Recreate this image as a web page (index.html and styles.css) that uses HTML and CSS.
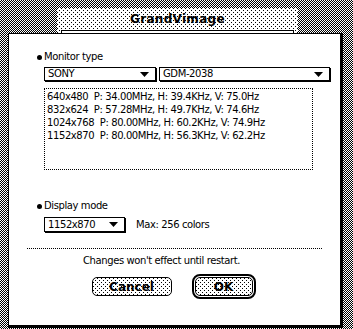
FILE: index.html
```html
<!DOCTYPE html>
<html lang="en">
<head>
    <meta charset="UTF-8">
    <title>GrandVimage</title>
    <link rel="stylesheet" href="styles.css">
</head>
<body>
    <div class="back-window">
        <div class="back-title"><span>GrandVimage</span></div>
        <div class="back-body">
            <div class="back-dash"></div>
        </div>
    </div>

    <div class="dialog">
        <div class="label"><span class="bullet"></span>Monitor type</div>
        <div class="popup-row">
            <div class="popup popup-maker">
                <span>SONY</span>
                <svg class="arrow" width="9" height="5" viewBox="0 0 9 5"><polygon points="0,0 9,0 4.5,5" fill="#000"/></svg>
            </div>
            <div class="popup popup-model">
                <span>GDM-2038</span>
                <svg class="arrow" width="9" height="5" viewBox="0 0 9 5"><polygon points="0,0 9,0 4.5,5" fill="#000"/></svg>
            </div>
        </div>
        <div class="mode-list">
            <div class="mode">640x480&nbsp;&nbsp;P: 34.00MHz, H: 39.4KHz, V: 75.0Hz</div>
            <div class="mode">832x624&nbsp;&nbsp;P: 57.28MHz, H: 49.7KHz, V: 74.6Hz</div>
            <div class="mode">1024x768&nbsp;&nbsp;P: 80.00MHz, H: 60.2KHz, V: 74.9Hz</div>
            <div class="mode">1152x870&nbsp;&nbsp;P: 80.00MHz, H: 56.3KHz, V: 62.2Hz</div>
        </div>

        <div class="label label-display"><span class="bullet"></span>Display mode</div>
        <div class="popup-row">
            <div class="popup popup-res">
                <span>1152x870</span>
                <svg class="arrow" width="9" height="5" viewBox="0 0 9 5"><polygon points="0,0 9,0 4.5,5" fill="#000"/></svg>
            </div>
            <span class="max">Max: 256 colors</span>
        </div>

        <div class="separator"></div>
        <div class="notice">Changes won't effect until restart.</div>

        <div class="buttons">
            <button class="btn btn-cancel">Cancel</button>
            <div class="default-ring">
                <button class="btn btn-ok">OK</button>
            </div>
        </div>
    </div>
</body>
</html>
```

FILE: styles.css
```css
body {
    margin: 0;
    width: 353px;
    height: 329px;
    overflow: hidden;
    position: relative;
    font-family: "DejaVu Sans", Verdana, sans-serif;
    font-size: 10px;
    letter-spacing: -0.4px;
    color: #000;
    background: repeating-conic-gradient(#000 0 25%, #fff 0 50%) 0 0 / 2px 2px;
}

/* sparse dot pattern used for title bar and buttons */
.back-window,
.btn {
    background-color: #fff;
    background-image:
        conic-gradient(from 0deg at 1px 1px, transparent 75%, #000 0),
        conic-gradient(from 0deg at 1px 1px, transparent 75%, #000 0);
    background-size: 4px 4px, 4px 4px;
    background-position: 0 0, 2px 2px;
}

.back-window {
    position: absolute;
    left: 57px;
    top: 8px;
    width: 241px;
    height: 317px;
    display: flex;
    flex-direction: column;
}
.back-title {
    height: 22px;
    display: flex;
    align-items: center;
    justify-content: center;
    font-family: "DejaVu Sans", sans-serif;
    font-weight: bold;
    font-size: 12px;
    letter-spacing: 0.3px;
}
.back-body {
    flex: 1;
    margin: 0 4px 4px;
    border: 1px solid #000;
    background: #fff;
    display: flex;
    flex-direction: column;
    justify-content: flex-end;
}
.back-dash {
    height: 3px;
    margin: 0 2px 2px;
    border-top: 1px dashed #000;
    border-bottom: 1px dotted #000;
}

.dialog {
    position: absolute;
    left: 8px;
    top: 33px;
    width: 331px;
    height: 274px;
    background: #fff;
    border-left: 1px solid #000;
    border-top: 1px solid #000;
    border-right: 3px solid #000;
    border-bottom: 3px solid #000;
    padding: 17px 0 0;
    box-sizing: content-box;
    display: flex;
    flex-direction: column;
}

.label {
    height: 12px;
    line-height: 12px;
    display: flex;
    align-items: center;
    padding-left: 28px;
}
.bullet {
    width: 5px;
    height: 5px;
    border-radius: 50%;
    background: #000;
    margin-right: 2px;
}
.label-display {
    margin-top: 30px;
}

.popup-row {
    display: flex;
    align-items: center;
    gap: 3px;
    padding-left: 35px;
    margin-top: 4px;
}
.popup {
    height: 12px;
    border: 1px solid #000;
    box-shadow: 1px 1px 0 #000;
    display: flex;
    align-items: center;
    justify-content: space-between;
    padding: 0 6px 0 3px;
    line-height: 12px;
}
.popup-maker {
    width: 101px;
}
.popup-model {
    width: 160px;
}
.popup-res {
    width: 70px;
    height: 13px;
}
.label-display + .popup-row {
    margin-top: 5px;
}
.max {
    margin-left: 8px;
}

.mode-list {
    margin: 7px 0 0 35px;
    width: 265px;
    height: 79px;
    border: 1px dotted #000;
    padding: 1px 0 0 2px;
    box-sizing: content-box;
}
.mode {
    height: 13px;
    line-height: 13px;
    white-space: nowrap;
}

.separator {
    margin: 16px 18px 0;
    border-top: 1px dotted #000;
}
.notice {
    margin-top: 6px;
    line-height: 12px;
    padding-left: 74px;
}

.buttons {
    display: flex;
    align-items: center;
    justify-content: center;
    gap: 20px;
    margin-top: 7px;
    padding-right: 2px;
}
.btn {
    font-family: "DejaVu Sans", sans-serif;
    font-weight: bold;
    font-size: 12px;
    height: 19px;
    border: 1px solid #000;
    border-radius: 5px;
    padding: 0;
    color: #000;
}
.btn-cancel {
    width: 80px;
}
.default-ring {
    border: 2px solid #000;
    border-radius: 8px;
    padding: 1px;
}
.btn-ok {
    width: 58px;
    display: block;
}
```
